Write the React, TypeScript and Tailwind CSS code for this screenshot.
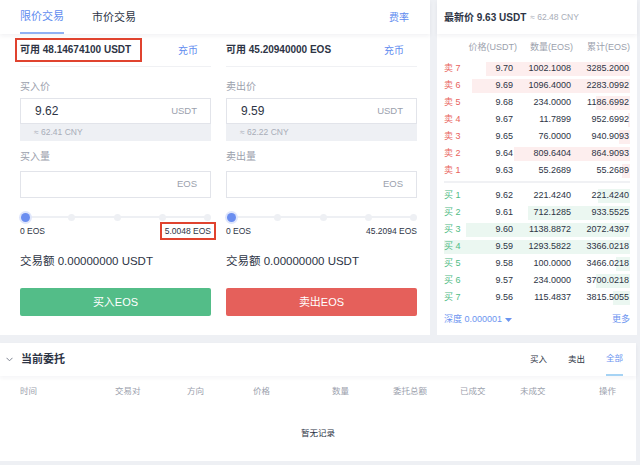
import React from "react";

const asks = [
  { n: 7, price: "9.70", amt: "1002.1008", total: "3285.2000" },
  { n: 6, price: "9.69", amt: "1096.4000", total: "2283.0992" },
  { n: 5, price: "9.68", amt: "234.0000", total: "1186.6992" },
  { n: 4, price: "9.67", amt: "11.7899", total: "952.6992" },
  { n: 3, price: "9.65", amt: "76.0000", total: "940.9093" },
  { n: 2, price: "9.64", amt: "809.6404", total: "864.9093" },
  { n: 1, price: "9.63", amt: "55.2689", total: "55.2689" },
];

const bids = [
  { n: 1, price: "9.62", amt: "221.4240", total: "221.4240" },
  { n: 2, price: "9.61", amt: "712.1285", total: "933.5525" },
  { n: 3, price: "9.60", amt: "1138.8872", total: "2072.4397" },
  { n: 4, price: "9.59", amt: "1293.5822", total: "3366.0218" },
  { n: 5, price: "9.58", amt: "100.0000", total: "3466.0218" },
  { n: 6, price: "9.57", amt: "234.0000", total: "3700.0218" },
  { n: 7, price: "9.56", amt: "115.4837", total: "3815.5055" },
];

const maxAmt = 1293.5822;

function Slider() {
  return (
    <div className="relative mt-[14px] h-[10px] flex items-center">
      <div className="absolute left-[5px] right-[3px] h-[2px] bg-[#eef0f4]" />
      <div className="relative flex w-full justify-between items-center pl-[1px]">
        <span className="w-[9px] h-[9px] rounded-full bg-[#6b8ef0] ring-2 ring-[#dfe6fb]" />
        <span className="w-[7px] h-[7px] rounded-full bg-[#eef0f4]" />
        <span className="w-[7px] h-[7px] rounded-full bg-[#eef0f4]" />
        <span className="w-[7px] h-[7px] rounded-full bg-[#eef0f4]" />
        <span className="w-[7px] h-[7px] rounded-full bg-[#eef0f4]" />
      </div>
    </div>
  );
}

function TradeColumn({
  avail,
  boxed,
  priceLabel,
  price,
  cny,
  amtLabel,
  max,
  maxBoxed,
  btn,
  btnColor,
}: {
  avail: string;
  boxed?: boolean;
  priceLabel: string;
  price: string;
  cny: string;
  amtLabel: string;
  max: string;
  maxBoxed?: boolean;
  btn: string;
  btnColor: string;
}) {
  return (
    <div className="w-[191px] shrink-0 flex flex-col">
      <div className="h-[33px] flex items-center justify-between pr-[13px] border-b border-[#f0f1f4]">
        <span className="relative text-[10px] leading-[14px] font-semibold text-[#2d3445]">
          {avail}
          {boxed && (
            <span className="absolute -left-[5px] -right-[11px] -top-[5px] -bottom-[5px] border-2 border-[#e0432f]" />
          )}
        </span>
        <span className="text-[10px] text-[#5f8cef]">充币</span>
      </div>
      <div className="mt-[13px] text-[10px] leading-[14px] text-[#9ba1ad]">{priceLabel}</div>
      <div className="mt-[4px] h-[26px] border border-[#e2e4ea] flex items-center justify-between pl-[14px] pr-[13px]">
        <span className="text-[12px] font-medium text-[#2d3445]">{price}</span>
        <span className="text-[9.5px] text-[#9ba1ad]">USDT</span>
      </div>
      <div className="h-[17px] bg-[#eef0f4] flex items-center pl-[14px] text-[8.5px] text-[#a8adb8]">
        ≈ {cny} CNY
      </div>
      <div className="mt-[9px] text-[10px] leading-[14px] text-[#9ba1ad]">{amtLabel}</div>
      <div className="mt-[7px] h-[27px] border border-[#e2e4ea] flex items-center justify-end pr-[13px]">
        <span className="text-[9.5px] text-[#9ba1ad]">EOS</span>
      </div>
      <Slider />
      <div className="mt-[3px] h-[12px] flex items-center justify-between text-[8.5px] text-[#2d3445]">
        <span>0 EOS</span>
        <span className="relative">
          {max}
          {maxBoxed && (
            <span className="absolute -left-[5px] -right-[5px] -top-[3px] -bottom-[3px] border-2 border-[#e0432f]" />
          )}
        </span>
      </div>
      <div className="mt-[17px] h-[16px] flex items-center text-[11.5px] text-[#2d3445]">
        交易额 0.00000000 USDT
      </div>
      <button
        className={`mt-[18px] h-[28px] rounded-[2px] text-white text-[11px] flex items-center justify-center ${btnColor}`}
      >
        {btn}
      </button>
    </div>
  );
}

function BookRow({
  label,
  color,
  barColor,
  r,
}: {
  label: string;
  color: string;
  barColor: string;
  r: { n: number; price: string; amt: string; total: string };
}) {
  const w = Math.round((parseFloat(r.amt) / maxAmt) * 186);
  return (
    <div className="relative h-[17px] flex items-center text-[9px] text-[#2d3445]">
      <div className={`absolute right-0 top-[2px] bottom-[1px] ${barColor}`} style={{ width: w }} />
      <div className="relative w-[69px] flex justify-between">
        <span className={color}>
          {label} {r.n}
        </span>
        <span>{r.price}</span>
      </div>
      <span className="relative w-[58px] text-right">{r.amt}</span>
      <span className="relative w-[58px] text-right">{r.total}</span>
    </div>
  );
}

export default function App() {
  return (
    <div className="w-[640px] h-[465px] bg-[#eef0f4] overflow-hidden font-['Liberation_Sans','Noto_Sans_CJK_SC',sans-serif]">
      <div className="flex gap-[7px]">
        {/* 交易表单 */}
        <div className="w-[430px] h-[335px] bg-white flex flex-col">
          <div className="h-[34px] flex items-stretch px-5 shadow-[0_2px_4px_rgba(30,40,70,0.06)] relative">
            <div className="flex items-center border-b-2 border-[#8fb1f4] text-[11px] text-[#5f8cef]">
              限价交易
            </div>
            <div className="ml-[28px] flex items-center text-[11px] text-[#2d3445]">市价交易</div>
            <div className="ml-auto mr-px flex items-center text-[10px] text-[#5f8cef]">费率</div>
          </div>
          <div className="flex gap-[15px] pl-5">
            <TradeColumn
              avail="可用 48.14674100 USDT"
              boxed
              priceLabel="买入价"
              price="9.62"
              cny="62.41"
              amtLabel="买入量"
              max="5.0048 EOS"
              maxBoxed
              btn="买入EOS"
              btnColor="bg-[#53bd88]"
            />
            <TradeColumn
              avail="可用 45.20940000 EOS"
              priceLabel="卖出价"
              price="9.59"
              cny="62.22"
              amtLabel="卖出量"
              max="45.2094 EOS"
              btn="卖出EOS"
              btnColor="bg-[#e5605b]"
            />
          </div>
        </div>

        {/* 盘口 */}
        <div className="w-[200px] h-[335px] bg-white flex flex-col">
          <div className="h-[34px] flex items-center px-[7px] gap-[4px] shadow-[0_2px_4px_rgba(30,40,70,0.06)]">
            <span className="text-[10px] font-semibold text-[#2d3445]">最新价 9.63 USDT</span>
            <span className="text-[8.5px] text-[#a8adb8]">≈ 62.48 CNY</span>
          </div>
          <div className="px-[7px] flex flex-col">
            <div className="mt-[5px] h-[17px] flex items-center text-[9px] text-[#9ba1ad]">
              <span className="w-[73px] text-right">价格(USDT)</span>
              <span className="w-[56px] text-right">数量(EOS)</span>
              <span className="w-[57px] text-right">累计(EOS)</span>
            </div>
            <div className="mt-[4px] flex flex-col">
              {asks.map((r) => (
                <BookRow key={"a" + r.n} label="卖" color="text-[#e8625c]" barColor="bg-[#fdeeee]" r={r} />
              ))}
            </div>
            <div className="mt-[2px] mb-[4px] h-[2px] bg-[#f0f1f4]" />
            <div className="flex flex-col">
              {bids.map((r) => (
                <BookRow key={"b" + r.n} label="买" color="text-[#4fbb85]" barColor="bg-[#ebf7f1]" r={r} />
              ))}
            </div>
            <div className="mt-[7px] h-[14px] flex items-center justify-between text-[9px] text-[#6b94f0]">
              <span className="flex items-center gap-[3px]">
                深度 0.000001
                <svg width="7" height="4" viewBox="0 0 7 4">
                  <path d="M0 0 L7 0 L3.5 4 Z" fill="#6b94f0" />
                </svg>
              </span>
              <span>更多</span>
            </div>
          </div>
        </div>
      </div>

      {/* 当前委托 */}
      <div className="mt-[8px] w-[636px] h-[118px] bg-white flex flex-col">
        <div className="h-[33px] flex items-stretch pl-[6px] pr-[13px] shadow-[0_2px_4px_rgba(30,40,70,0.05)]">
          <div className="flex items-center gap-[8px]">
            <svg width="7" height="5" viewBox="0 0 7 5">
              <path d="M0.5 0.8 L3.5 3.8 L6.5 0.8" fill="none" stroke="#7d8391" strokeWidth="1" />
            </svg>
            <span className="text-[11px] font-semibold text-[#2d3445]">当前委托</span>
          </div>
          <div className="ml-auto flex items-stretch gap-[21px] text-[8.5px]">
            <span className="flex items-center text-[#2d3445]">买入</span>
            <span className="flex items-center text-[#2d3445]">卖出</span>
            <span className="flex items-center text-[#6b94f0] border-b-2 border-[#a6d3f4]">全部</span>
          </div>
        </div>
        <div className="mt-[9px] h-[12px] flex items-center px-5 text-[8.5px] text-[#9ba1ad]">
          <span className="w-[95px]">时间</span>
          <span className="w-[72px]">交易对</span>
          <span className="w-[66px]">方向</span>
          <span className="w-[79px]">价格</span>
          <span className="w-[61px]">数量</span>
          <span className="w-[67px]">委托总额</span>
          <span className="w-[60px]">已成交</span>
          <span className="w-[60px]">未成交</span>
          <span className="ml-auto">操作</span>
        </div>
        <div className="mt-[30px] h-[12px] flex items-center justify-center text-[8.5px] text-[#2d3445]">
          暂无记录
        </div>
      </div>
    </div>
  );
}
